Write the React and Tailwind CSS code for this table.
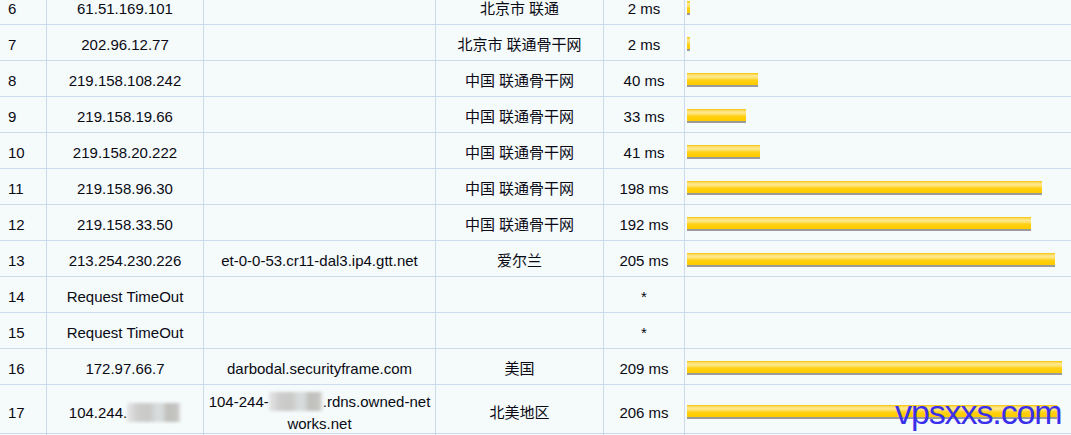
import React from "react";

const rows = [
  { n: 6, ip: "61.51.169.101", host: "", loc: "北京市 联通", ms: 2, w: 3 },
  { n: 7, ip: "202.96.12.77", host: "", loc: "北京市 联通骨干网", ms: 2, w: 3 },
  { n: 8, ip: "219.158.108.242", host: "", loc: "中国 联通骨干网", ms: 40, w: 71 },
  { n: 9, ip: "219.158.19.66", host: "", loc: "中国 联通骨干网", ms: 33, w: 59 },
  { n: 10, ip: "219.158.20.222", host: "", loc: "中国 联通骨干网", ms: 41, w: 73 },
  { n: 11, ip: "219.158.96.30", host: "", loc: "中国 联通骨干网", ms: 198, w: 355 },
  { n: 12, ip: "219.158.33.50", host: "", loc: "中国 联通骨干网", ms: 192, w: 344 },
  { n: 13, ip: "213.254.230.226", host: "et-0-0-53.cr11-dal3.ip4.gtt.net", loc: "爱尔兰", ms: 205, w: 368 },
  { n: 14, ip: "Request TimeOut", host: "", loc: "", ms: null, w: 0 },
  { n: 15, ip: "Request TimeOut", host: "", loc: "", ms: null, w: 0 },
  { n: 16, ip: "172.97.66.7", host: "darbodal.securityframe.com", loc: "美国", ms: 209, w: 375 },
];

function Bar({ w }) {
  return (
    <div
      className="h-[14px] bg-[linear-gradient(to_bottom,#f2c200_0px,#ffe17a_2px,#ffe890_4px,#ffd21a_7px,#ffcc00_10px,#ffcc00_12px,#9b9b9b_12px,#9b9b9b_14px)]"
      style={{ width: w }}
    />
  );
}

function Blur({ w }) {
  return (
    <span
      className="inline-block h-[19px] align-[-4px] blur-[1.5px] bg-[linear-gradient(to_right,#e6e6e6_0%,#cdcdcd_20%,#c9c9c7_40%,#d8dcdc_55%,#d6dada_65%,#c0c0bd_75%,#c4c4c2_92%,#eeeeee_100%)]"
      style={{ width: w }}
    />
  );
}

const cell = "border-r border-[#cdd9ee] flex items-center pt-[6px]";

export default function App() {
  return (
    <div className="relative w-[1071px] h-[435px] overflow-hidden bg-[#f5fafb] text-[15px] text-[#0a0a14] font-['Liberation_Sans','Noto_Sans_CJK_SC',sans-serif]">
      <div className="mt-[-11px]">
        {rows.map((r) => (
          <div
            key={r.n}
            className="grid grid-cols-[47px_157px_232px_168px_81px_1fr] h-[36px] border-b border-[#cdd9ee]"
          >
            <div className={`${cell} pl-[8px]`}>{r.n}</div>
            <div className={`${cell} justify-center`}>{r.ip}</div>
            <div className={`${cell} justify-center`}>{r.host}</div>
            <div className={`${cell} justify-center`}>{r.loc}</div>
            <div className={`${cell} justify-center`}>{r.ms === null ? "*" : `${r.ms} ms`}</div>
            <div className="flex items-center pl-[2px] pt-[3px]">{r.w > 0 && <Bar w={r.w} />}</div>
          </div>
        ))}
        <div className="grid grid-cols-[47px_157px_232px_168px_81px_1fr] h-[49px] border-b border-[#cdd9ee]">
          <div className={`${cell} pl-[8px]`}>17</div>
          <div className={`${cell} justify-center`}>
            <span className="whitespace-nowrap">
              104.244.<Blur w={54} />
            </span>
          </div>
          <div className={`${cell} justify-center text-center leading-[22px]`}>
            <span>
              <span className="whitespace-nowrap">
                104-244-<Blur w={54} />.rdns.owned-net
              </span>
              <br />
              works.net
            </span>
          </div>
          <div className={`${cell} justify-center`}>北美地区</div>
          <div className={`${cell} justify-center`}>206 ms</div>
          <div className="flex items-center pl-[2px] pt-[3px]">
            <Bar w={370} />
          </div>
        </div>
      </div>
      <div className="absolute left-[895px] top-[395px] text-[34px] tracking-[-1.1px] leading-none text-[#3a30ec] font-['Liberation_Sans',sans-serif] whitespace-nowrap">
        vpsxxs.com
      </div>
    </div>
  );
}
